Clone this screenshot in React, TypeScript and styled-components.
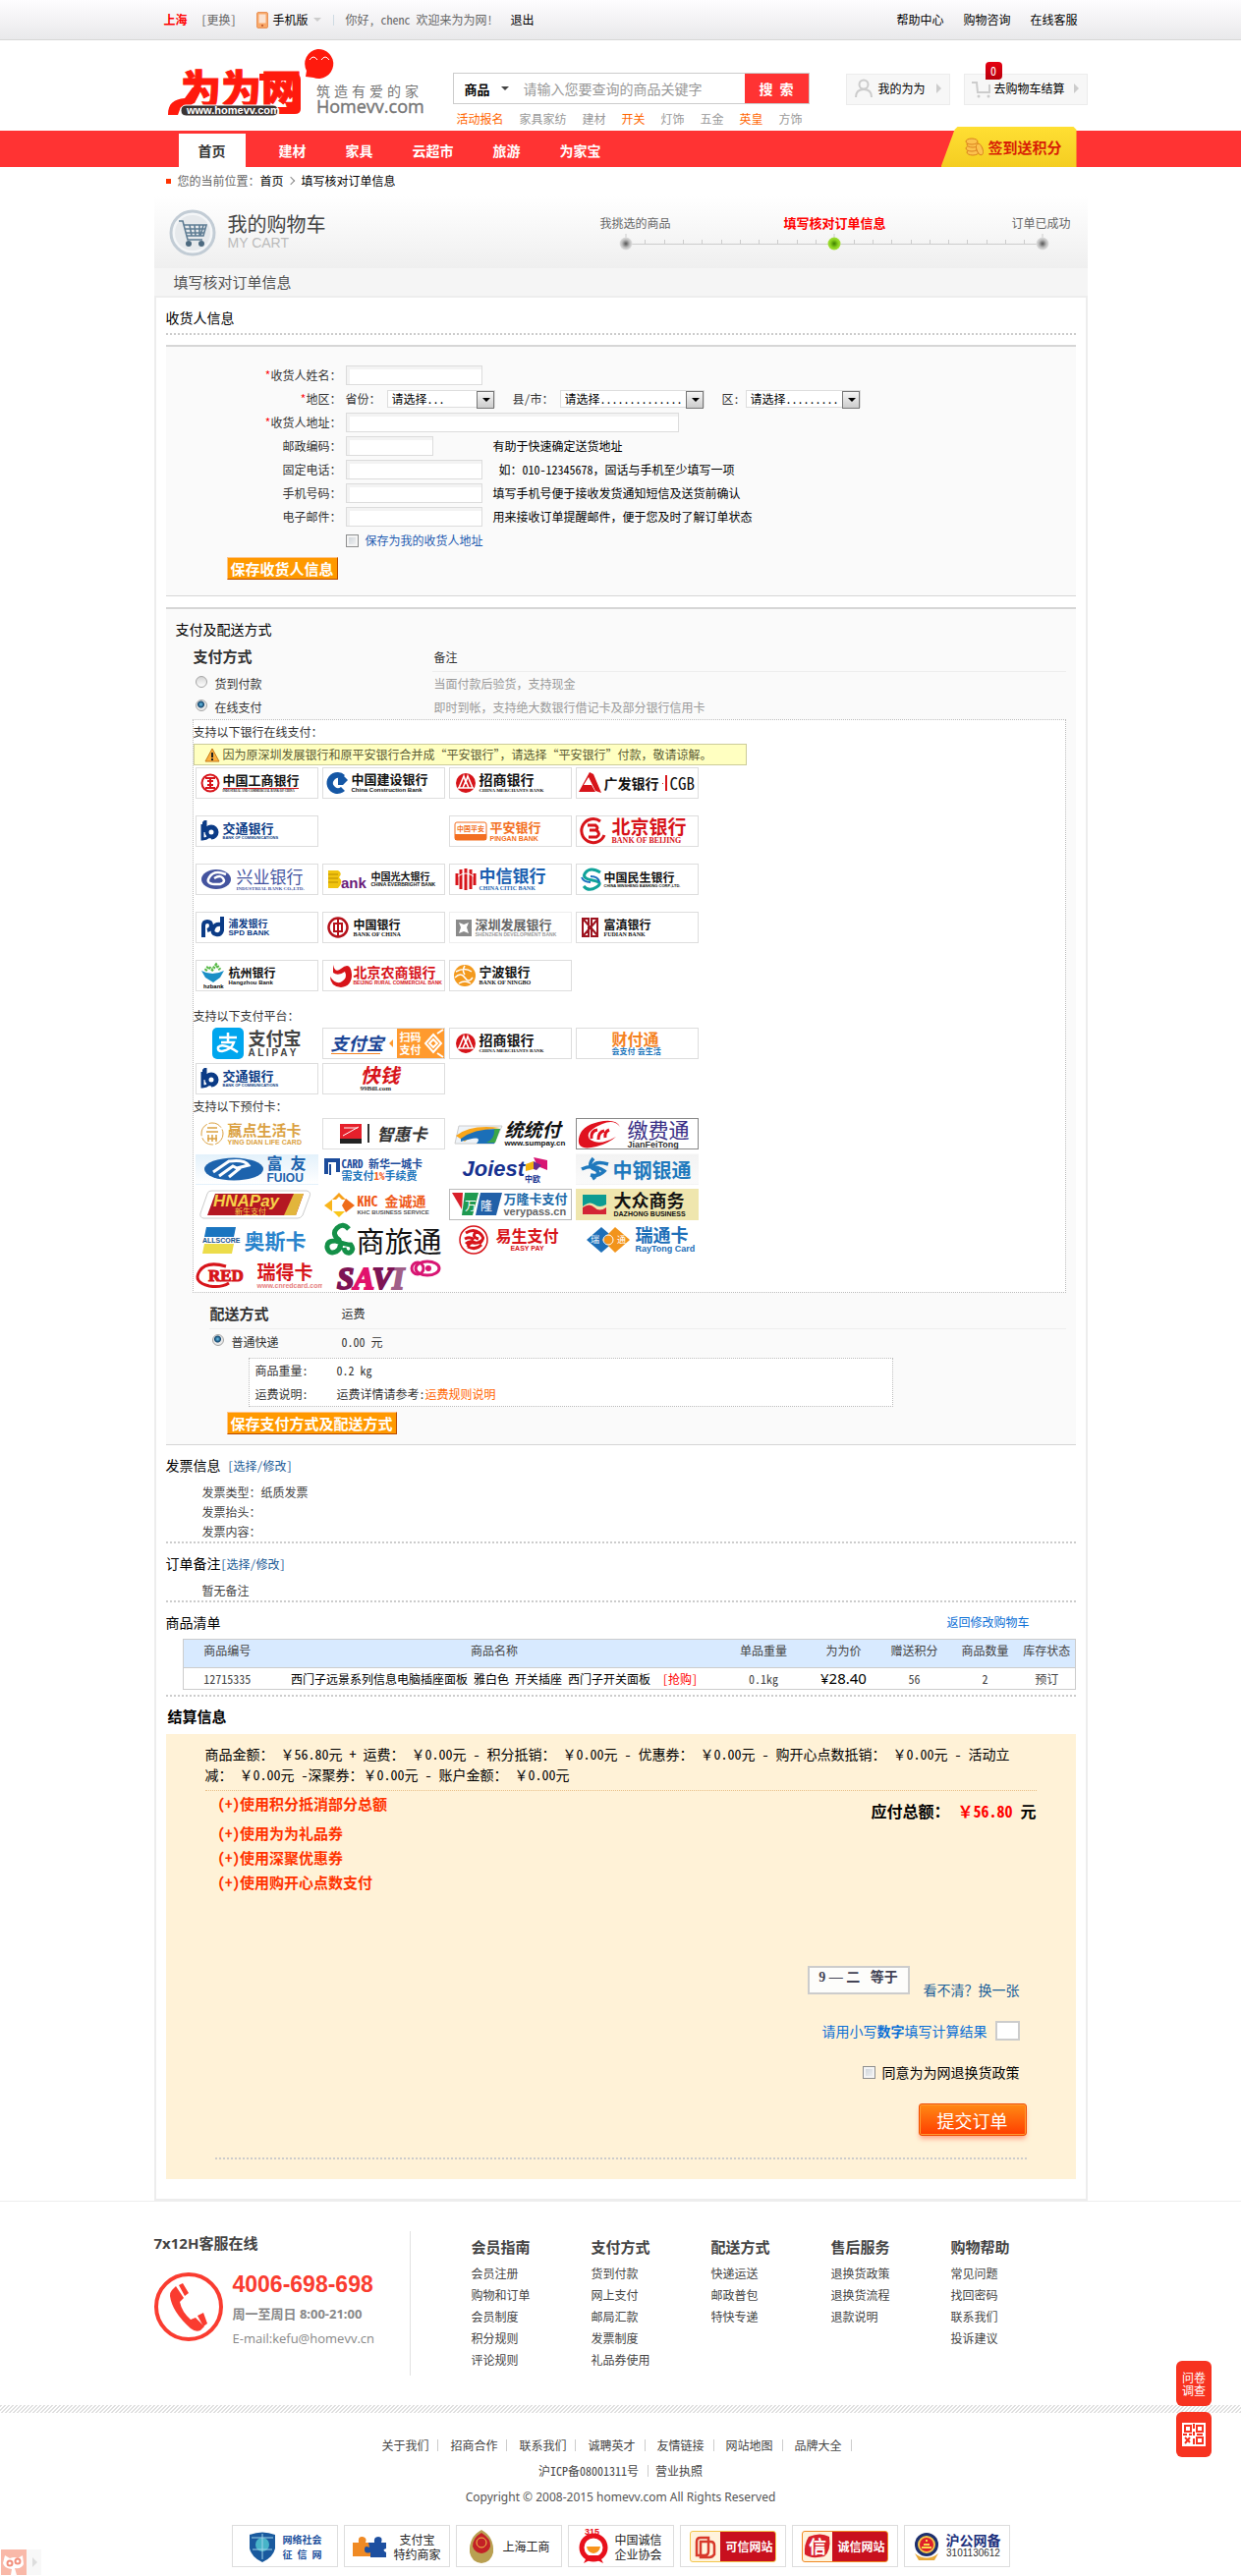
import React, { ReactNode } from 'react';
import styled, { createGlobalStyle, css } from 'styled-components';

const cjk = '"Noto Sans Mono CJK SC", "Noto Sans CJK SC", sans-serif';
const latin = '"Noto Sans", "Noto Sans CJK SC", sans-serif';

const GlobalStyle = createGlobalStyle`
  * { box-sizing: border-box; }
  body { margin: 0; background: #fff; color: #333; font: 12px/24px ${cjk}; }
  ul, ol, dl, dd, h1, h2, h3, p, fieldset { margin: 0; padding: 0; border: 0; list-style: none; font-weight: 400; }
  a { color: inherit; text-decoration: none; }
  input, select, button { font-family: inherit; margin: 0; border-radius: 0; }
  svg { display: block; flex: none; overflow: visible; }
`;

const Wrap = styled.div`
  width: 100%;
  max-width: 950px;
  margin: 0 auto;
`;

/* ---------- top bar ---------- */
const TopBar = styled.div`
  background: linear-gradient(#fefdff, #e9e9eb);
  border-bottom: 1px solid #d6d6d6;
`;
const TopInner = styled(Wrap)`
  display: flex;
  align-items: center;
  padding: 0 10px;
  line-height: 40px;
  color: #666;
  white-space: nowrap;
`;
const City = styled.strong`color: #f00; margin-right: 14px;`;
const Dark = styled.a`color: #000;`;
const Logout = styled(Dark)`margin-left: 18px;`;
const Mobile = styled.a`
  display: flex;
  align-items: center;
  gap: 5px;
  margin: 0 12px 0 20px;
  color: #000;
`;
const Caret = styled.i<{ $color: string }>`
  border: 4px solid transparent;
  border-top-color: ${p => p.$color};
  border-bottom: 0;
`;
const Sep = styled.i`width: 1px; height: 11px; background: #cfdbe3; margin-right: 12px;`;
const TopRight = styled.nav`display: flex; gap: 20px; margin-left: auto;`;

/* ---------- header ---------- */
const Header = styled(Wrap)`
  display: flex;
  align-items: flex-start;
  padding: 8px 0 0 13px;
  height: 92px;
`;
const SearchCol = styled.div`margin: 25px 37px 0 31px; flex: 1;`;
const SearchBox = styled.form`
  display: flex;
  align-items: center;
  height: 32px;
  border: 1px solid #ccc;
`;
const SearchKind = styled.label`
  display: flex;
  align-items: center;
  width: 60px;
  padding-left: 11px;
`;
const KindSelect = styled.select`
  appearance: none;
  border: 0;
  padding: 0;
  width: 37px;
  background: none;
  font-size: 13px;
  font-weight: 700;
  color: #000;
`;
const SearchInput = styled.input`
  flex: 1;
  min-width: 0;
  border: 0;
  padding: 0 11px;
  font-size: 14px;
  outline: 0;
  &::placeholder { color: #999; opacity: 1; }
`;
const SearchButton = styled.button`
  width: 65px;
  height: 30px;
  border: 0;
  background: #ff3333;
  color: #fff;
  font-size: 14px;
  font-weight: 700;
`;
const HotList = styled.div`display: flex; gap: 16px; padding: 3px 4px; white-space: nowrap;`;
const Hot = styled.a<{ $on?: boolean }>`color: ${p => (p.$on ? '#ff6600' : '#999')};`;
const HeadButton = styled.a<{ $w: number }>`
  position: relative;
  display: flex;
  align-items: center;
  width: ${p => p.$w}px;
  height: 32px;
  margin-top: 26px;
  padding: 0 8px 3px 6px;
  border: 1px solid #ececec;
  background: #f7f7f7;
  color: #000;
  white-space: nowrap;
  & + & { margin-left: 14px; }
`;
const Arrow = styled.i`
  margin-left: auto;
  border: 5px solid transparent;
  border-left-color: #ccc;
  border-right: 0;
`;
const Badge = styled.b`
  position: absolute;
  left: 21px;
  top: -13px;
  width: 17px;
  height: 18px;
  border-radius: 4px 4px 4px 0;
  background: linear-gradient(#e60012, #b8000c);
  color: #fff;
  font-weight: 400;
  line-height: 18px;
  text-align: center;
`;

/* ---------- navigation ---------- */
const NavBar = styled.nav`background: #ff3333;`;
const NavInner = styled(Wrap)`display: flex; height: 37px; padding: 3px 11px 0 25px;`;
const NavLink = styled.a<{ $on?: boolean }>`
  padding: 0 20px;
  line-height: 34px;
  font-size: 14px;
  font-weight: 700;
  color: #fff;
  ${p => p.$on && css`background: #fff; color: #333; margin-right: 14px;`}
`;
const Points = styled.a`
  display: flex;
  align-items: center;
  gap: 4px;
  width: 138px;
  height: 41px;
  margin: -7px 0 0 auto;
  padding-left: 24px;
  background: linear-gradient(#ffdf33, #f4cd22);
  clip-path: polygon(17px 0, 135px 0, 100% 3px, 100% 100%, 0 100%, 14px 3px);
  color: #d81e06;
  font-size: 15px;
  font-weight: 700;
`;

const Crumbs = styled(Wrap)`
  display: flex;
  align-items: center;
  padding: 2px 12px 4px;
  color: #666;
  a { color: #000; }
`;
const Bullet = styled.i`width: 5px; height: 5px; background: #ff3300; margin-right: 7px;`;
const Chevron = styled.i`
  width: 6px; height: 6px; margin: 0 8px 0 4px;
  border: solid #888; border-width: 1px 1px 0 0; transform: rotate(45deg);
`;

/* ---------- banner ---------- */
const Banner = styled(Wrap)`
  display: flex;
  align-items: center;
  height: 73px;
  padding: 0 0 0 15px;
  background: linear-gradient(#fff, #efefef);
`;
const BannerTitle = styled.h1`
  margin: 0 auto 0 12px;
  font-size: 20px;
  line-height: 22px;
  color: #444;
  small { display: block; font: 14px/17px "Liberation Sans", sans-serif; color: #bbb; }
`;
const Steps = styled.ol`
  display: grid;
  grid-template-columns: 92px 314px 1fr;
  width: 496px;
  margin-right: 10px;
  color: #666;
  line-height: 20px;
`;
const Step = styled.li<{ $on?: boolean; $last?: boolean }>`
  text-align: center;
  ${p => p.$last && css`text-align: right; padding-right: 7px;`}
  ${p => p.$on && css`color: #f00; font-weight: 700; font-size: 13px;`}
`;
const SubBar = styled(Wrap)`
  padding: 0 20px;
  background: #f5f5f5;
  line-height: 28px;
  font-size: 15px;
  color: #555;
`;

/* ---------- main box ---------- */
const Main = styled.main`
  width: 100%;
  max-width: 950px;
  margin: 0 auto;
  padding: 0 10px 20px;
  border: 2px solid #ededed;
`;
const Block = styled.section`padding-top: 10px; border-bottom: 2px dotted #ccc;`;
const Title = styled.h2<{ $bold?: boolean }>`
  font-size: 14px;
  line-height: 20px;
  color: #000;
  ${p => p.$bold && css`font-weight: 700; font-size: 15px;`}
`;
const TitleRow = styled.div`display: flex; justify-content: space-between; padding-bottom: 6px; line-height: 20px;`;
const GoBack = styled.a`margin-right: 47px; color: #0b6fd6;`;
const Edit = styled.a<{ $gap?: boolean }>`
  margin-left: ${p => (p.$gap ? 7 : 0)}px;
  font-size: 12px;
  color: #1c5c96;
`;
const Lines = styled.div`padding: 7px 0 0 37px; line-height: 20px; color: #444;`;
const Panel = styled.section`
  margin-top: 10px;
  padding: 17px 0 16px;
  border: solid #d6d6d6;
  border-width: 2px 0 1px;
  background: #fafafa;
`;
const PayPanel = styled(Panel)`margin-top: 11px; padding: 10px 10px;`;

const Field = styled.div`display: flex; align-items: center; height: 24px; color: #333; white-space: nowrap;`;
const FieldLabel = styled.label`
  width: 179px;
  margin-right: 4px;
  text-align: right;
  i { color: #f00; font-style: normal; }
`;
const FieldControl = styled.div`width: 150px;`;
const Text = styled.input<{ $w: number }>`
  display: block;
  width: ${p => p.$w}px;
  height: 20px;
  padding: 0 4px;
  border: 1px solid #dcdcdc;
  background: #fff;
  box-shadow: inset 3px 3px 0 #f3f3f3;
`;
const Note = styled.span`color: #000;`;
const SelectBox = styled.span<{ $w: number }>`
  position: relative;
  display: block;
  width: ${p => p.$w}px;
  height: 18px;
  margin: 0 18px 0 6px;
  &::before {
    content: '';
    position: absolute;
    right: 1px; top: 1px; width: 16px; height: 16px;
    border: 1px solid #777;
    background: linear-gradient(#f5f5f5, #ccc);
    pointer-events: none;
  }
  &::after {
    content: '';
    position: absolute;
    right: 5px; top: 8px;
    border: 4px solid transparent;
    border-top-color: #000;
    border-bottom: 0;
    pointer-events: none;
  }
`;
const Select = styled.select`
  display: block;
  appearance: none;
  width: 100%;
  height: 18px;
  padding: 0 0 0 4px;
  border: 1px solid #ddd;
  background: #fff;
  font-size: 12px;
  line-height: 16px;
  color: #000;
`;
const Check = styled.input`
  appearance: none;
  width: 13px;
  height: 13px;
  border: 1px solid #8e8f8f;
  background: linear-gradient(135deg, #c9d0d6, #f6f6f6);
  box-shadow: inset 0 0 0 2px #f4f4f4;
`;
const Radio = styled.input`
  appearance: none;
  flex: none;
  width: 12px;
  height: 12px;
  margin: 0 8px 4px 2px;
  border: 1px solid #a5a5a5;
  border-radius: 50%;
  background: linear-gradient(#d5d5d5, #fff);
  &:checked { background: radial-gradient(circle at 45% 40%, #6cc6ee 0, #12456e 3px, #e8e8e8 4px); }
`;
const SaveButton = styled.button<{ $indent: number }>`
  display: block;
  margin: 5px 0 0 ${p => p.$indent}px;
  height: 23px;
  padding: 0 3px;
  border: 1px solid;
  border-color: #ffc58a #b84a00 #b84a00 #ffc58a;
  background: #ff9900;
  color: #fff;
  font-size: 15px;
  line-height: 20px;
  font-weight: 700;
`;
const SaveLabel = styled.label`color: #1f5bb0; padding-left: 7px;`;

const PayTable = styled.div`padding: 6px 0 0 18px;`;
const PayRow = styled.div`display: flex; color: #333;`;
const PayCell = styled.label`display: flex; align-items: center; width: 243px;`;
const PayHead = styled.div`width: 243px; font-size: 15px; font-weight: 700;`;
const PayHeadNote = styled.div`flex: 1; padding: 1px 0 2px 2px; border-bottom: 1px solid #eee;`;
const PayNote = styled.span`color: #999; padding-left: 2px;`;

const BankBox = styled.div`
  margin: 0 0 0 17px;
  padding-bottom: 1px;
  border: 1px dotted #bbb;
  background: #fff;
`;
const BankTitle = styled.h3`font-size: 12px; line-height: 24px;`;
const Warning = styled.p`
  display: flex;
  align-items: center;
  gap: 3px;
  width: 563px;
  padding-left: 10px;
  border: 1px solid #cccc99;
  background: #ffffc1;
  line-height: 20px;
  color: #5c5c33;
  white-space: nowrap;
`;
const Tiles = styled.ul<{ $gap: number; $after?: number }>`
  display: grid;
  grid-template-columns: repeat(4, 125px);
  gap: ${p => p.$gap}px 4px;
  padding: ${p => (p.$gap > 10 ? 2 : 0)}px 0 ${p => p.$after || 0}px 2px;
`;
const Tile = styled.li<{ $pad: number; $gap?: number; $border?: string; $bg?: string }>`
  display: flex;
  align-items: center;
  gap: ${p => p.$gap ?? 3}px;
  height: 32px;
  padding-left: ${p => p.$pad}px;
  border: 1px solid ${p => p.$border || '#ddd'};
  background: ${p => p.$bg || '#fff'};
  white-space: nowrap;
`;
const Words = styled.div`display: flex; flex-direction: column; align-items: flex-start;`;
const Name = styled.span<{ $size: number; $color: string; $light?: boolean; $slant?: boolean }>`
  font-size: ${p => p.$size}px;
  line-height: ${p => p.$size + 1}px;
  font-weight: ${p => (p.$light ? 400 : 700)};
  font-style: ${p => (p.$slant ? 'italic' : 'normal')};
  color: ${p => p.$color};
`;
const Sub = styled.span<{ $size: number; $color: string; $serif?: boolean }>`
  font: 700 ${p => p.$size}px/${p => p.$size + 2}px ${p => (p.$serif ? '"Liberation Serif", serif' : '"Liberation Sans", "Noto Sans CJK SC", sans-serif')};
  color: ${p => p.$color};
`;
const Rule = styled.i<{ $w: number; $color: string }>`width: ${p => p.$w}px; height: 1px; margin-top: 1px; background: ${p => p.$color};`;
const Orange = styled.div`
  display: flex;
  align-items: center;
  gap: 2px;
  flex: none;
  height: 30px;
  width: 48px;
  padding-left: 3px;
  background: #ff9a2e;
  color: #fff;
  font-size: 11px;
  line-height: 13px;
  font-weight: 700;
  span { flex: none; }
`;

const ShipTable = styled.div`margin: 9px 0 0 34px;`;
const ShipHead = styled.div`display: flex; height: 28px; border-bottom: 1px solid #eee; margin-bottom: 1px; padding-left: 1px;`;
const ShipRow = styled.div`display: flex; color: #333; padding-left: 1px;`;
const ShipCell = styled.label<{ $bold?: boolean }>`
  display: flex; align-items: center; width: 134px;
  ${p => p.$bold && css`font-size: 15px; font-weight: 700; line-height: 24px; display: block;`}
`;
const ShipBox = styled.dl`
  display: grid;
  grid-template-columns: 83px 1fr;
  width: 656px;
  max-width: 100%;
  margin: 4px 0 0 40px;
  padding-left: 6px;
  border: 1px dotted #bbb;
  background: #fff;
  dt { margin: 0; }
  a { color: #ff6600; }
`;

const Goods = styled.table`
  width: calc(100% - 17px);
  margin: 1px 0 5px 17px;
  border-collapse: collapse;
  table-layout: fixed;
  border: 1px solid #ccc;
  text-align: center;
  color: #444;
  th { height: 29px; padding: 0 0 7px; background: #d8eaff; font-weight: 400; line-height: 20px; }
  td { height: 22px; padding: 0; border-top: 1px solid #ccc; line-height: 20px; }
  a { color: #000; }
  em { color: #f00; font-style: normal; margin-left: 12px; }
`;
const Price = styled.span`font: 15px/20px ${latin}; color: #000;`;

/* ---------- settlement ---------- */
const SettleTitle = styled.div`padding: 10px 2px 8px;`;
const Settle = styled.section`padding: 10px 40px 20px; background: #fff2d7;`;
const Sum = styled.p`
  padding-bottom: 5px;
  border-bottom: 1px dotted #e8c088;
  font-size: 14px;
  line-height: 21px;
  color: #000;
  white-space: nowrap;
`;
const SettleRow = styled.div`display: flex; justify-content: space-between;`;
const Options = styled.ul`
  padding-left: 13px;
  font-size: 15px;
  line-height: 25px;
  font-weight: 700;
  color: #ff3300;
  li:first-child { margin-bottom: 5px; }
`;
const Total = styled.p`
  padding-top: 8px;
  font-size: 16px;
  line-height: 24px;
  font-weight: 700;
  color: #000;
  b { color: #f00; }
`;
const Confirm = styled.div`
  display: flex;
  flex-direction: column;
  align-items: flex-end;
  margin: 73px 10px 0;
  padding-bottom: 14px;
  border-bottom: 2px dotted #ccc;
  font-size: 14px;
  line-height: 20px;
`;
const ConfirmRow = styled.div<{ $h: number }>`
  display: flex;
  align-items: center;
  height: ${p => p.$h}px;
  margin: 0 7px 22px 0;
`;
const Captcha = styled.span`
  width: 104px;
  height: 29px;
  margin: 0 14px 5px 0;
  border: 2px solid #ccc;
  background: #fdfdfb;
  font: 700 14px/20px "Liberation Serif", "Noto Sans CJK SC", serif;
  color: #445;
  text-align: center;
  white-space: pre;
`;
const Change = styled.a`color: #1a5f99; margin-top: 14px;`;
const Ask = styled.label`color: #0b6fd6; margin-right: 8px;`;
const Answer = styled.input`width: 25px; height: 20px; border: 2px solid #ccc; background: #fff;`;
const Agree = styled.label`display: flex; align-items: center; gap: 7px; color: #000;`;
const Submit = styled.button`
  width: 110px;
  height: 33px;
  margin-bottom: 8px;
  border: 1px solid #f04a00;
  border-radius: 3px;
  background: linear-gradient(#ff8a14, #ff3d00);
  box-shadow: inset 0 0 0 1px #ff9c33, 0 4px 5px -1px #ffa58a;
  color: #fff;
  font-size: 18px;
  line-height: 28px;
`;

/* ---------- footer ---------- */
const Footer = styled.footer`border-top: 1px solid #eee; color: #444;`;
const FootTop = styled(Wrap)`display: flex; padding: 30px 0;`;
const Service = styled.div`width: 261px; height: 147px; border-right: 1px solid #e2e2e2;`;
const ServiceTitle = styled.h3`font: 700 15px/24px ${latin};`;
const Contact = styled.div`display: flex; gap: 10px; padding-top: 18px;`;
const Phone = styled.p`font: 700 23px/24px "Liberation Sans", sans-serif; color: #fa3c30;`;
const Hours = styled.p`padding-top: 4px; font: 700 13px/28px ${latin}; color: #888; white-space: nowrap;`;
const Mail = styled.p`font: 13px/22px "Open Sans", sans-serif; color: #888;`;
const Help = styled.div`display: flex; padding: 4px 0 0 62px;`;
const HelpCol = styled.div`
  width: 122px;
  h3 { font-size: 15px; line-height: 24px; font-weight: 700; padding-bottom: 4px; }
  li { line-height: 22px; }
`;
const Hatch = styled.div`
  height: 8px;
  background: linear-gradient(135deg, #e0e0e0 25%, #fff 25% 50%, #e0e0e0 50% 75%, #fff 75%) 0 0 / 4px 4px;
`;
const Legal = styled.div`display: flex; flex-direction: column; align-items: center; padding: 20px 0 4px; line-height: 26px;`;
const Bar = styled.i`width: 1px; height: 12px; margin-left: 9px; margin-right: 7px; background: #ccc;`;
const LinkRow = styled.div`
  display: flex;
  align-items: center;
  ${Bar} { margin-right: 12px; }
  ${Bar}:last-child { margin-right: 8px; }
`;
const LinkPair = styled.div`display: flex; align-items: center;`;
const Copy = styled.p`font: 12px/28px "Noto Sans", sans-serif; color: #555;`;
const Certs = styled.ul`display: flex; justify-content: center; gap: 6px; padding: 14px 0 5px;`;
const Cert = styled.li<{ $ink?: string; $size?: number }>`
  display: flex;
  align-items: center;
  justify-content: center;
  gap: 6px;
  width: 108px;
  height: 43px;
  border: 1px solid #ddd;
  background: #fff;
  font-size: ${p => p.$size || 12}px;
  line-height: 15px;
  color: ${p => p.$ink || '#222'};
  white-space: pre-line;
  text-align: center;
  small { display: block; font: 10px/12px "Liberation Sans", sans-serif; color: #333; }
`;
const RedSign = styled.span<{ $edge: string }>`
  display: flex;
  align-items: center;
  gap: 6px;
  width: 88px;
  height: 32px;
  border: 1px solid ${p => p.$edge};
  border-radius: 3px;
  background: linear-gradient(90deg, #fff3dc 30px, #c8101e 30px);
  color: #fff;
  font-size: 12px;
  font-weight: 700;
`;

const Side = styled.div`
  position: fixed;
  right: 30px;
  bottom: 121px;
  display: flex;
  flex-direction: column;
  gap: 6px;
`;
const SideButton = styled.a`
  display: flex;
  align-items: center;
  justify-content: center;
  width: 36px;
  height: 46px;
  border-radius: 6px;
  background: #f73320;
  color: #fff;
  font-size: 12px;
  line-height: 13px;
  text-align: center;
`;
const Share = styled.a`
  position: fixed;
  left: 1px;
  bottom: 1px;
  display: flex;
  align-items: center;
  gap: 6px;
  width: 41px;
  background: #f8f8f8;
`;

/* ---------- drawings ---------- */
const Logo = () => (
  <svg width="260" height="72" viewBox="0 0 260 72" aria-label="为为网 筑造有爱的家 Homevv.com">
    <path d="M1 68C1 56 7 52 18 51L26 40H36L28 56 14 60 11 68Z" fill="#ff1a0d" />
    <text x="14" y="57" fontFamily="Noto Sans CJK SC" fontSize="41" fontWeight="900" fill="#ff1a0d" stroke="#ff1a0d">为为网</text>
    <path d="M94 26H130Q136 26 136 32V62Q136 67 130 67H112V60H128V33H94Z" fill="#ff1a0d" />
    <rect x="14" y="58" width="99" height="11" rx="5" fill="#3a3332" stroke="#fff" />
    <text x="20" y="67" fontFamily="Liberation Sans" fontSize="11" fontWeight="700" fill="#fff">www.homevv.com</text>
    <path d="M153 1a15 15 0 1 1-4 29l-8-1 1-6A15 15 0 0 1 153 1Z" fill="#ff1a0d" />
    <path d="M145 12q4-6 8 0M157 12q4-6 8 0" stroke="#fff" fill="none" />
    <text x="152" y="49" fontFamily="Noto Sans CJK SC" fontSize="14" letterSpacing="4" fill="#777">筑造有爱的家</text>
    <text x="152" y="66" fontFamily="Open Sans" fontSize="18" fill="#777" stroke="#777" strokeWidth=".4">Homevv.com</text>
  </svg>
);
const CartIcon = () => (
  <svg width="48" height="48" viewBox="0 0 48 48">
    <circle cx="24" cy="24" r="22" fill="#f4f6f8" stroke="#c2ccd5" strokeWidth="3" />
    <circle cx="24" cy="24" r="18" fill="#e6e9ec" />
    <path d="M10 12h4l5 19h15M15 16h23l-3 11H18M21 16l2 11M26 16l1 11M31 16v11M35 16l-3 11M16 20h21M17 24h19" fill="none" stroke="#5f7d94" strokeWidth="1.6" />
    <circle cx="20" cy="35" r="3" fill="#4d6a80" /><circle cx="33" cy="35" r="3" fill="#4d6a80" />
  </svg>
);
const ticks = Array.from({ length: 21 }, (_, i) => i + 1);
const Track = () => (
  <svg width="496" height="20" viewBox="0 0 496 20">
    <defs>
      <radialGradient id="gd"><stop offset="0" stopColor="#555" /><stop offset=".6" stopColor="#bbb" /><stop offset="1" stopColor="#e2e2e2" /></radialGradient>
      <radialGradient id="gg"><stop offset="0" stopColor="#3d7d00" /><stop offset=".6" stopColor="#86cf1c" /><stop offset="1" stopColor="#a6e03c" /></radialGradient>
    </defs>
    <path d={'M36 11.5H460' + ticks.map(i => `M${Math.round(36 + i * 19.3) + 0.5} 7v4`).join('')} stroke="#ccc" />
    {[36, 248, 460].map((x, i) => (
      <g key={x}><path d={`M${x} 1v6`} stroke="#ccc" /><circle cx={x} cy="11" r="6.5" fill={i === 1 ? 'url(#gg)' : 'url(#gd)'} /></g>
    ))}
  </svg>
);
const Svg = ({ w, h = 24, children }: { w: number; h?: number; children: ReactNode }) => (
  <svg width={w} height={h} viewBox={`0 0 ${w} ${h}`}>{children}</svg>
);
const R = '#d7141a', N = '#0b3b86';
const marks: Record<string, ReactNode> = {
  icbc: <Svg w={20}><circle cx="10" cy="12" r="8.5" fill="none" stroke={R} strokeWidth="2" /><path d="M5 7h10M5 17h10M7 10h6M7 14h6M10 7v10" stroke={R} strokeWidth="2" /></Svg>,
  ccb: <Svg w={22}><path d="M11 1a11 11 0 0 1 7 3l-4 4a5 5 0 1 0 0 8l4 4A11 11 0 1 1 11 1Z" fill="#1557a5" /><path d="M11 7l4-4 6 6-5 5h-5Z" fill="#1557a5" /></Svg>,
  cmb: <Svg w={20}><circle cx="10" cy="12" r="10" fill={R} /><path d="M3 17 8 5l2 6 2-6 5 12M7 17l3-7 3 7M2 17h16" fill="none" stroke="#fff" strokeWidth="1.6" /></Svg>,
  cgb: <Svg w={24}><path d="M12 1 16 3 24 22 18 20 11 6 6 14H14L18 21H1Z" fill={R} /></Svg>,
  bocom: <Svg w={19}><path d="M2 4q3 0 3-3v12a6 6 0 1 1 6 6M2 5v15q4 0 6-2" fill="none" stroke={N} strokeWidth="3" /><circle cx="11" cy="13" r="4.5" fill="none" stroke={N} strokeWidth="4" /></Svg>,
  pingan: <Svg w={34} h={20}><rect x="1" y="1" width="32" height="18" rx="2" fill="#fff" stroke="#f36f21" /><rect x="1" y="13" width="32" height="6" fill="#f36f21" /><text x="3" y="10" fontSize="7" fontWeight="700" fill="#f36f21" fontFamily="Noto Sans CJK SC">中国平安</text></Svg>,
  bob: <Svg w={26} h={28}><path d="M20 4A12 12 0 1 0 24 18" fill="none" stroke={R} strokeWidth="3" /><path d="M7 8h8q4 3 0 5H9h7q5 4 0 7H8" fill="none" stroke={R} strokeWidth="3" /></Svg>,
  cib: <Svg w={32}><ellipse cx="16" cy="12" rx="15" ry="10" fill="#44549f" /><path d="M26 7Q14 2 9 10t11 7q6-2 3-6t-9 0" fill="none" stroke="#fff" strokeWidth="2.5" /></Svg>,
  ceb: <Svg w={42}><path d="M1 3h10q5 3 1 7 5 5-1 11H1Z" fill="#f1c40f" /><path d="M1 7h10M1 11h10M1 15h10" stroke="#b98b00" /><text x="14" y="21" fontFamily="Liberation Sans" fontSize="15" fontWeight="700" fill="#6a1b7a">ank</text></Svg>,
  citic: <Svg w={22}><path d="M6 2v20M11 1v22M16 2v20M2 6v12M20 6v12" stroke={R} strokeWidth="3" /><path d="M3 9q8-6 16 0" stroke="#fff" fill="none" /></Svg>,
  cmbc: <Svg w={21}><path d="M20 5Q10-1 5 5t7 8 4 7-13-1" fill="none" stroke="#10a39a" strokeWidth="3" /><path d="M1 10q2 5 9 5M19 15q-1-6-9-6" fill="none" stroke="#1a6fc0" strokeWidth="2" /></Svg>,
  spd: <Svg w={24}><path d="M3 22V10q0-4 4-4t4 4-4 5M22 1v14q-1 5-6 4t-3-6 8-4" fill="none" stroke={N} strokeWidth="4" /></Svg>,
  boc: <Svg w={22}><circle cx="11" cy="12" r="9.5" fill="none" stroke="#b5121b" strokeWidth="2.5" /><path d="M11 2v20M7 8h8v8H7Z" stroke="#b5121b" strokeWidth="2" fill="none" /></Svg>,
  sdb: <Svg w={18}><path d="M1 4h16v17H1Z" fill="#8a8a8a" /><path d="M4 7l5 2 5-2-2 5 2 6-5-2-5 2 2-6Z" fill="#fff" /></Svg>,
  fudian: <Svg w={19}><path d="M2 3h6v18H2ZM11 3h6v18h-6ZM3 4l14 16M17 4 3 20" fill="none" stroke="#9d1420" strokeWidth="2" /></Svg>,
  hz: <Svg w={25} h={26}><path d="M1 8q11 6 23 0l-4 7-7 5-8-5Z" fill="#1b8fc6" /><path d="M5 8l3-4 4 3 4-5 4 5" stroke="#57b947" strokeWidth="3" strokeDasharray="2 1" fill="none" /><text x="3" y="26" fontSize="6" fontWeight="700" fontFamily="Liberation Sans">hzbank</text></Svg>,
  brcb: <Svg w={24} h={28}><path d="M4 3q2 9 8 4 10-8 11 6 0 12-11 13Q1 25 1 15q6 9 12 5t3-10q-7 5-12 1Z" fill={R} /></Svg>,
  ningbo: <Svg w={23}><circle cx="11" cy="12" r="11" fill="#f39a1e" /><path d="M2 8q9-5 16 0M1 14q6-6 10 0t8 0M5 20q6-4 12 0M11 2q-3 5 0 9" stroke="#fff" fill="none" strokeWidth="1.5" /></Svg>,
  alipay: <Svg w={32} h={32}><rect width="32" height="32" rx="5" fill="#00a6ee" /><path d="M7 10h18M16 5v9M9 15h13q-2 7-12 9-5 0-4-4 5-5 20 5" fill="none" stroke="#fff" strokeWidth="2.5" /></Svg>,
  ying: <Svg w={24}><circle cx="12" cy="12" r="11" fill="none" stroke="#dba243" strokeDasharray="14 2" /><path d="M7 6h10M6 10h12M8 13v7M12 13v7M16 13v7M7 17h10" stroke="#dba243" strokeWidth="1.5" /></Svg>,
  zhi: <Svg w={34}><rect x="1" y="2" width="22" height="15" fill="#e6202b" /><path d="M4 14 20 5M5 6h14" stroke="#fff" /><rect x="1" y="17" width="22" height="5" fill="#222" /><path d="M30 2v19" stroke="#333" strokeWidth="2" /></Svg>,
  sum: <Svg w={54}><path d="M4 22 8 4H52L44 22Z" fill="#eef3f8" stroke="#ccc" /><path d="M5 14Q20 2 50 6 26 8 14 20Z" fill="#f9a61a" /><path d="M10 17Q24 6 50 7L44 22H26Q34 12 10 20Z" fill="#1b6fb8" /><path d="M44 7h6l-5 14h-9q9-4 8-14Z" fill="#3aa648" /></Svg>,
  jiao: <Svg w={46} h={30}><path d="M44 8Q40-1 22 3T2 20t18 8q12-3 20-10-14 8-22 5t-6-8 14-10 18 3Z" fill="#e0121f" /><path d="M15 20q-1-8 6-9M22 21q0-8 6-9M29 19q-1-6 4-8" stroke="#e0121f" strokeWidth="3" fill="none" /></Svg>,
  fuiou: <Svg w={62} h={26}><ellipse cx="31" cy="13" rx="30" ry="11.5" fill="#1d63ad" /><path d="M10 16 26 5q16-2 20 4l-12 3M16 20 30 10l6 3-10 8" stroke="#fff" strokeWidth="3" fill="none" /></Svg>,
  ncard: <Svg w={16}><path d="M2 17V3h12v12" fill="none" stroke="#1b4b9b" strokeWidth="4" /><path d="M6 18V7" stroke="#1b4b9b" strokeWidth="2" /></Svg>,
  joiest: <Svg w={24} h={18}><path d="M1 8 9 5v8l-8 2Z" fill="#f2b20f" /><path d="M9 1l14 3v10L13 10Z" fill="#d81673" /><path d="M9 5l8 4-5 5-3-1Z" fill="#6b2a8c" /></Svg>,
  sinosteel: <Svg w={30}><path d="M14 1q-7 8 1 11t-2 10M29 7q-14-4-16 3M2 12q12-6 23 2-6 6-14 4" fill="none" stroke="#2079bd" strokeWidth="3.5" /></Svg>,
  khc: <Svg w={33} h={26}><path d="M16 1l7 7h-4l-3-3-3 3H9Z" fill="#f7a11b" /><path d="M9 8 1 14l8 6Z" fill="#f9b51c" /><path d="M23 7l9 7-9 7-4-7Z" fill="#ef6c1a" /><path d="M10 20h12l-6 6Z" fill="#f9c81c" /></Svg>,
  wan: <Svg w={54} h={26}><path d="M1 1h11l-1 17Z" fill="#d8202a" /><path d="M14 1h14l-6 23H11Z" fill="#1f9a51" /><path d="M30 1h22l-6 23H25Z" fill="#2160a8" /><text x="14" y="19" fontSize="12" fill="#fff" fontFamily="Noto Sans CJK SC">万</text><text x="30" y="19" fontSize="12" fill="#fff" fontFamily="Noto Sans CJK SC">隆</text></Svg>,
  dazhong: <Svg w={26} h={22}><path d="M1 1h24v10q-7 4-12 0T1 13Z" fill="#0c9c92" /><path d="M1 14q7-5 12 0t12 0v7H1Z" fill="#d32535" /></Svg>,
  allscore: <Svg w={36} h={28}><path d="M5 1h30l-2 10H3Z" fill="#1a75c0" /><path d="M3 18h30l-2 10H1Z" fill="#ecdc4a" /><text x="1" y="17" fontSize="7" fontWeight="700" fill="#17528e" fontFamily="Liberation Sans">ALLSCORE</text></Svg>,
  shang: <Svg w={31} h={32}><path d="M26 5Q20-2 14 4t2 12q4 8-3 12-7 3-9-4-1-7 8-7 12 4 16 4 4 5-1 8-5 1-6-5" fill="none" stroke="#149048" strokeWidth="5" /></Svg>,
  easy: <Svg w={32} h={30}><circle cx="16" cy="15" r="14" fill="#fff" stroke={R} strokeWidth="1.5" /><path d="M8 8q8-5 14 0t2 8-8 2-6 4M7 14q6-3 9 1M19 6q-6 6 2 8M10 22q8 4 14-2M8 19q4-4 10-1M22 19l3-4" fill="none" stroke={R} strokeWidth="3" /></Svg>,
  ray: <Svg w={46} h={28}><path d="M16 1 31 14 16 27 1 14Z" fill="#1d6fb8" /><path d="M30 1 45 14 30 27 17 14Z" fill="#f2941b" /><text x="5" y="17" fontSize="9" fill="#fff" fontFamily="Noto Sans CJK SC">瑞</text><text x="32" y="17" fontSize="9" fill="#fff" fontFamily="Noto Sans CJK SC">通</text><circle cx="23" cy="14" r="5" fill="none" stroke="#fff" /></Svg>,
  red: <Svg w={58} h={26}><path d="M30 4Q10-2 3 9t10 15q12 2 20-3" fill="none" stroke={R} strokeWidth="3" /><text x="12" y="19" fontSize="17" fontWeight="700" fill={R} fontFamily="Liberation Serif" stroke={R}>RED</text></Svg>,
  savi: <Svg w={108} h={30}><text x="2" y="29" fontSize="31" fontWeight="700" fontStyle="italic" fontFamily="Liberation Serif" strokeWidth="2"><tspan fill="#7d1455" stroke="#7d1455">S</tspan><tspan fill="#e2126c" stroke="#e2126c">A</tspan><tspan fill="#7d1455" stroke="#7d1455">V</tspan><tspan fill="#a05f88" stroke="#a05f88">I</tspan></text><circle cx="84" cy="8" r="6" fill="#fff" stroke="#d81673" strokeWidth="3" /><ellipse cx="94" cy="8" rx="12" ry="7" fill="none" stroke="#d81673" strokeWidth="3" /><circle cx="95" cy="8" r="3" fill="#d81673" /></Svg>,
};

type Brand = {
  mark?: string; pad: number; gap?: number; name?: string; size?: number; color?: string; sub?: string; subSize?: number;
  subColor?: string; serif?: boolean; border?: string; bg?: string; light?: boolean; slant?: boolean; body?: ReactNode; empty?: boolean; rule?: string;
};
const K = '#111', none = 'transparent';
const cmb: Brand = { mark: 'cmb', pad: 6, gap: 4, name: '招商银行', size: 14, sub: 'CHINA MERCHANTS BANK', subSize: 5, serif: true };
const bocom: Brand = { mark: 'bocom', pad: 4, gap: 4, name: '交通银行', size: 13, color: N, sub: 'BANK OF COMMUNICATIONS', subSize: 4 };
const banks: Brand[] = [
  { mark: 'icbc', pad: 4, name: '中国工商银行', size: 13, rule: R, sub: 'INDUSTRIAL AND COMMERCIAL BANK OF CHINA', subSize: 3, serif: true },
  { mark: 'ccb', pad: 4, name: '中国建设银行', size: 13, sub: 'China Construction Bank', subSize: 6 },
  cmb,
  { mark: 'cgb', pad: 1, gap: 3, body: <><Name $size={14} $color={K}>广发银行</Name><Rule as="i" $w={1} $color={R} /><Svg w={1} h={16}><path d="M0 0v16" stroke={R} strokeWidth="2" /></Svg><Name $size={17} $color={K} $light>CGB</Name></> },
  bocom,
  { pad: 0, empty: true },
  { mark: 'pingan', pad: 4, name: '平安银行', size: 13, color: '#f36f21', sub: 'PINGAN BANK', subSize: 7 },
  { mark: 'bob', pad: 4, gap: 6, name: '北京银行', size: 19, color: R, sub: 'BANK OF BEIJING', subSize: 8, serif: true },
  { mark: 'cib', pad: 4, gap: 5, name: '兴业银行', size: 17, color: '#44549f', light: true, sub: 'INDUSTRIAL BANK CO.,LTD.', subSize: 5, serif: true },
  { mark: 'ceb', pad: 4, name: '中国光大银行', size: 10, sub: 'CHINA EVERBRIGHT BANK', subSize: 5 },
  { mark: 'citic', pad: 5, name: '中信银行', size: 17, color: '#1a5fb0', sub: 'CHINA CITIC BANK', subSize: 6, serif: true },
  { mark: 'cmbc', pad: 4, name: '中国民生银行', size: 12, sub: 'CHINA MINSHENG BANKING CORP.,LTD.', subSize: 4 },
  { mark: 'spd', pad: 4, gap: 5, name: '浦发银行', size: 10, color: N, sub: 'SPD BANK', subSize: 8 },
  { mark: 'boc', pad: 4, gap: 5, name: '中国银行', size: 12, sub: 'BANK OF CHINA', subSize: 6, serif: true },
  { mark: 'sdb', pad: 5, name: '深圳发展银行', size: 13, color: '#666', sub: 'SHENZHEN DEVELOPMENT BANK', subSize: 5, subColor: '#999', border: '#eee' },
  { mark: 'fudian', pad: 4, gap: 5, name: '富滇银行', size: 12, sub: 'FUDIAN BANK', subSize: 6, serif: true },
  { mark: 'hz', pad: 4, gap: 4, name: '杭州银行', size: 12, sub: 'Hangzhou Bank', subSize: 6 },
  { mark: 'brcb', pad: 6, gap: 1, name: '北京农商银行', size: 14, color: R, sub: 'BEIJING RURAL COMMERCIAL BANK', subSize: 5 },
  { mark: 'ningbo', pad: 4, name: '宁波银行', size: 13, sub: 'BANK OF NINGBO', subSize: 6, serif: true },
];
const platforms: Brand[] = [
  { mark: 'alipay', pad: 16, gap: 5, name: '支付宝', size: 18, color: '#444', sub: 'A L I P A Y', subSize: 10, border: none },
  { pad: 8, gap: 4, body: <><Words><Name $size={18} $color="#1b4596" $slant>支付宝</Name><Rule $w={50} $color="#f5821f" /></Words><Svg w={5}><path d="M5 8 1 12l4 4Z" fill="#ff9a2e" /></Svg><Orange><span>扫码<br />支付</span><Svg w={20} h={30}><path d="M10 6l8 9-8 9-8-9ZM10 11l4 4-4 4-4-4ZM20 1l-6 4M20 29l-6-4" fill="none" stroke="#fff" strokeWidth="2" /></Svg></Orange></> },
  cmb,
  { pad: 36, body: <Words><Name $size={16} $color="#f5821f">财付通</Name><Sub $size={8} $color="#1b75bb">会支付 会生活</Sub></Words> },
  bocom,
  { pad: 38, body: <Words><Name $size={20} $color={R} $slant>快钱</Name><Sub $size={7} $color="#333" $serif>99Bill.com</Sub></Words> },
];
const cards: Brand[] = [
  { mark: 'ying', pad: 4, gap: 4, name: '赢点生活卡', size: 15, color: '#dba243', sub: 'YING DIAN LIFE CARD', subSize: 7, border: none },
  { mark: 'zhi', pad: 16, gap: 5, name: '智惠卡', size: 17, color: '#333', slant: true },
  { mark: 'sum', pad: 1, gap: 1, name: '统统付', size: 19, slant: true, sub: 'www.sumpay.cn', subSize: 8, border: none },
  { mark: 'jiao', pad: 0, gap: 6, name: '缴费通', size: 21, light: true, color: '#3a2f86', sub: 'JianFeiTong', subSize: 9, subColor: '#333', border: '#888' },
  { mark: 'fuiou', pad: 7, gap: 3, name: '富 友', size: 16, color: '#1d63ad', sub: 'FUIOU', subSize: 12, border: none, bg: 'linear-gradient(#e3f1fb, #fff)' },
  { mark: 'ncard', pad: 1, gap: 2, border: none, body: <Words><Name $size={11} $color="#1b4b9b">CARD 新华一城卡</Name><Name $size={11} $color="#1b75bb">需支付<Name as="b" $size={11} $color="#f5601f">1%</Name>手续费</Name></Words> },
  { pad: 13, gap: 0, border: none, body: <><Sub $size={22} $color="#16318f"><i>Joiest</i></Sub><Words>{marks.joiest}<Name $size={8} $color="#16318f">中欧</Name></Words></> },
  { mark: 'sinosteel', pad: 3, gap: 4, name: '中钢银通', size: 20, color: '#2079bd', border: none, bg: 'linear-gradient(#f3f3f3, #fafafa)' },
  { pad: 3, border: none, body: <Svg w={113} h={30}><path d="M12 1H109Q114 2 112 7L105 26Q103 29 100 29H4Q0 28 1 24L8 4Q9 1 12 1Z" fill="#fff" stroke="#ccc" /><path d="M16 4h90L98 26H8Z" fill="#b41722" /><path d="M96 4h10L98 26H86Z" fill="#e2b53c" /><text x="14" y="17" fontSize="17" fontWeight="700" fontStyle="italic" fill="#f6d24a" fontFamily="Liberation Sans">HNAPay</text><text x="36" y="25" fontSize="8" fill="#f6d24a" fontFamily="Noto Sans CJK SC">新生支付</text></Svg> },
  { mark: 'khc', pad: 0, gap: 2, border: none, name: 'KHC 金诚通', size: 14, color: '#ef5a1a', sub: 'KHC BUSINESS SERVICE', subSize: 6, subColor: '#555' },
  { mark: 'wan', pad: 1, gap: 0, border: '#bbb', name: '万隆卡支付', size: 13, color: '#1d6aa8', sub: 'verypass.cn', subSize: 11, subColor: '#666' },
  { mark: 'dazhong', pad: 5, gap: 7, border: none, bg: '#efe6ae', name: '大众商务', size: 18, sub: 'DAZHONG BUSINESS', subSize: 7 },
  { mark: 'allscore', pad: 5, gap: 8, border: none, name: '奥斯卡', size: 21, color: '#2a84cc' },
  { mark: 'shang', pad: 0, gap: 3, border: none, name: '商旅通', size: 29, light: true },
  { mark: 'easy', pad: 8, gap: 7, border: none, body: <Words><Name $size={16} $color={R}>易生支付</Name><EasyPay $size={7} $color={R}>EASY PAY</EasyPay></Words> },
  { mark: 'ray', pad: 9, gap: 5, border: none, name: '瑞通卡', size: 18, color: '#1d6fb8', sub: 'RayTong Card', subSize: 9, subColor: '#1d6fb8' },
  { mark: 'red', pad: 0, gap: 4, border: none, name: '瑞得卡', size: 19, color: R, sub: 'www.cnredcard.com', subSize: 7, subColor: '#e68080' },
  { pad: 12, border: none, body: marks.savi },
];
function EasyPay(props: { $size: number; $color: string; children: ReactNode }) {
  return <EasyLine {...props} />;
}
const EasyLine = styled(Sub)`align-self: center;`;

const BrandTiles = ({ list, gap, after }: { list: Brand[]; gap: number; after?: number }) => (
  <Tiles $gap={gap} $after={after}>
    {list.map((b, i) => b.empty ? <li key={i} /> : (
      <Tile key={i} $pad={b.pad} $gap={b.gap} $border={b.border} $bg={b.bg}>
        {b.mark && marks[b.mark]}
        {b.body || (
          <Words>
            <Name $size={b.size!} $color={b.color || K} $light={b.light} $slant={b.slant}>{b.name}</Name>
            {b.rule && <Rule $w={77} $color={b.rule} />}
            {b.sub && <Sub $size={b.subSize!} $color={b.subColor || b.color || K} $serif={b.serif}>{b.sub}</Sub>}
          </Words>
        )}
      </Tile>
    ))}
  </Tiles>
);

const helps: [string, string[]][] = [
  ['会员指南', ['会员注册', '购物和订单', '会员制度', '积分规则', '评论规则']],
  ['支付方式', ['货到付款', '网上支付', '邮局汇款', '发票制度', '礼品券使用']],
  ['配送方式', ['快递运送', '邮政普包', '特快专递']],
  ['售后服务', ['退换货政策', '退换货流程', '退款说明']],
  ['购物帮助', ['常见问题', '找回密码', '联系我们', '投诉建议']],
];
const contactFields: [string, string, number, string][] = [
  ['zip', '邮政编码：', 89, '有助于快速确定送货地址'],
  ['tel', '固定电话：', 139, '\u00a0如：010-12345678，固话与手机至少填写一项'],
  ['mobile', '手机号码：', 139, '填写手机号便于接收发货通知短信及送货前确认'],
  ['mail', '电子邮件：', 139, '用来接收订单提醒邮件，便于您及时了解订单状态'],
];
const aboutLinks = ['关于我们', '招商合作', '联系我们', '诚聘英才', '友情链接', '网站地图', '品牌大全'];

const Picker = ({ label, dots, w }: { label: string; dots: string; w: number }) => (
  <>
    <label htmlFor={label}>{label}</label>
    <SelectBox $w={w}><Select id={label}><option>{'请选择' + dots}</option></Select></SelectBox>
  </>
);

export default function App() {
  return (
    <>
      <GlobalStyle />
      <TopBar>
        <TopInner>
          <City>上海</City><a href="#city">[更换]</a>
          <Mobile href="#mobile">
            <Svg w={12} h={17}><rect x=".5" y=".5" width="11" height="16" rx="1.5" fill="#f9a868" stroke="#e8935a" /><rect x="2.5" y="2.5" width="7" height="9" fill="#fbe3d2" /><circle cx="6" cy="14" r="1" fill="#b5512a" /></Svg>
            手机版 <Caret $color="#ccc" />
          </Mobile>
          <Sep />你好, chenc 欢迎来为为网!
          <Logout href="#logout">退出</Logout>
          <TopRight><Dark href="#help">帮助中心</Dark><Dark href="#ask">购物咨询</Dark><Dark href="#service">在线客服</Dark></TopRight>
        </TopInner>
      </TopBar>
      <Header as="header">
        <Logo />
        <SearchCol>
          <SearchBox>
            <SearchKind><KindSelect aria-label="搜索类型"><option>商品</option></KindSelect><Caret $color="#444" /></SearchKind>
            <SearchInput aria-label="搜索" placeholder="请输入您要查询的商品关键字" />
            <SearchButton type="button">搜 索</SearchButton>
          </SearchBox>
          <HotList>
            <Hot href="#h" $on>活动报名</Hot><Hot href="#h">家具家纺</Hot><Hot href="#h">建材</Hot><Hot href="#h" $on>开关</Hot>
            <Hot href="#h">灯饰</Hot><Hot href="#h">五金</Hot><Hot href="#h" $on>英皇</Hot><Hot href="#h">方饰</Hot>
          </HotList>
        </SearchCol>
        <HeadButton href="#me" $w={106}>
          <Svg w={26} h={20}><circle cx="11" cy="6" r="4.5" fill="none" stroke="#ccc" strokeWidth="2" /><path d="M3 19q0-8 8-8t8 8" fill="none" stroke="#ccc" strokeWidth="2" /></Svg>
          我的为为<Arrow />
        </HeadButton>
        <HeadButton href="#cart" $w={126}>
          <Svg w={24} h={20}><path d="M1 4h5l1 10h12V6" fill="none" stroke="#ccc" strokeWidth="2" /><circle cx="8" cy="18" r="1.5" fill="#ccc" /><circle cx="18" cy="18" r="1.5" fill="#ccc" /></Svg>
          去购物车结算<Arrow /><Badge>0</Badge>
        </HeadButton>
      </Header>
      <NavBar>
        <NavInner>
          <NavLink href="#home" $on>首页</NavLink>
          {['建材', '家具', '云超市', '旅游', '为家宝'].map(t => <NavLink key={t} href="#nav">{t}</NavLink>)}
          <Points href="#points">
            <Svg w={20} h={20}><g fill="#fcc24e" stroke="#d9801e"><ellipse cx="8" cy="15" rx="6" ry="3" /><ellipse cx="7" cy="11" rx="6" ry="3" /><ellipse cx="8" cy="7" rx="6" ry="3" /><ellipse cx="7" cy="4" rx="6" ry="3" /><ellipse cx="15" cy="12" rx="3" ry="6" transform="rotate(-20 15 12)" /></g></Svg>
            签到送积分
          </Points>
        </NavInner>
      </NavBar>
      <Crumbs><Bullet />您的当前位置：<a href="#home">首页</a><Chevron /><a href="#order">填写核对订单信息</a></Crumbs>
      <Banner>
        <CartIcon />
        <BannerTitle>我的购物车<small>MY CART</small></BannerTitle>
        <div>
          <Steps><Step>我挑选的商品</Step><Step $on>填写核对订单信息</Step><Step $last>订单已成功</Step></Steps>
          <Track />
        </div>
      </Banner>
      <SubBar>填写核对订单信息</SubBar>
      <Main>
        <Block><TitleRow><Title>收货人信息</Title></TitleRow></Block>
        <Panel>
          <Field><FieldLabel htmlFor="name"><i>*</i>收货人姓名：</FieldLabel><Text id="name" $w={139} /></Field>
          <Field>
            <FieldLabel as="span"><i>*</i>地区：</FieldLabel>
            <Picker label="省份：" dots="..." w={110} />
            <Picker label="县/市：" dots=".............." w={147} />
            <Picker label="区:" dots="........." w={117} />
          </Field>
          <Field><FieldLabel htmlFor="addr"><i>*</i>收货人地址：</FieldLabel><Text id="addr" $w={339} /></Field>
          {contactFields.map(([id, label, w, note]) => (
            <Field key={id}>
              <FieldLabel htmlFor={id}>{label}</FieldLabel>
              <FieldControl><Text id={id} $w={w} /></FieldControl>
              <Note>{note}</Note>
            </Field>
          ))}
          <Field><FieldLabel as="span" /><Check type="checkbox" id="save" /><SaveLabel htmlFor="save">保存为我的收货人地址</SaveLabel></Field>
          <SaveButton type="button" $indent={62}>保存收货人信息</SaveButton>
        </Panel>

        <PayPanel>
          <Title>支付及配送方式</Title>
          <PayTable>
            <PayRow><PayHead>支付方式</PayHead><PayHeadNote>备注</PayHeadNote></PayRow>
            <PayRow><PayCell><Radio type="radio" name="pay" />货到付款</PayCell><PayNote>当面付款后验货，支持现金</PayNote></PayRow>
            <PayRow><PayCell><Radio type="radio" name="pay" defaultChecked />在线支付</PayCell><PayNote>即时到帐，支持绝大数银行借记卡及部分银行信用卡</PayNote></PayRow>
          </PayTable>
          <BankBox>
            <BankTitle>支持以下银行在线支付：</BankTitle>
            <Warning>
              <Svg w={16} h={15}><path d="M8 1 15 14H1Z" fill="#fbb040" stroke="#c87d1a" /><path d="M8 5v5M8 11v2" stroke="#222" strokeWidth="2" /></Svg>
              因为原深圳发展银行和原平安银行合并成“平安银行”，请选择“平安银行”付款，敬请谅解。
            </Warning>
            <BrandTiles list={banks} gap={17} after={13} />
            <BankTitle>支持以下支付平台：</BankTitle>
            <BrandTiles list={platforms} gap={4} />
            <BankTitle>支持以下预付卡：</BankTitle>
            <BrandTiles list={cards} gap={4} />
          </BankBox>
          <ShipTable>
            <ShipHead><ShipCell as="div" $bold>配送方式</ShipCell><span>运费</span></ShipHead>
            <ShipRow><ShipCell><Radio type="radio" name="ship" defaultChecked />普通快递</ShipCell><span>0.00 元</span></ShipRow>
            <ShipBox>
              <dt>商品重量:</dt><dd>0.2 kg</dd>
              <dt>运费说明:</dt><dd>运费详情请参考:<a href="#rule">运费规则说明</a></dd>
            </ShipBox>
          </ShipTable>
          <SaveButton type="button" $indent={52}>保存支付方式及配送方式</SaveButton>
        </PayPanel>

        <Block>
          <Title>发票信息<Edit href="#invoice" $gap>[选择/修改]</Edit></Title>
          <Lines><p>发票类型：纸质发票</p><p>发票抬头：</p><p>发票内容：</p></Lines>
        </Block>
        <Block>
          <Title>订单备注<Edit href="#note">[选择/修改]</Edit></Title>
          <Lines>暂无备注</Lines>
        </Block>
        <Block>
          <TitleRow><Title>商品清单</Title><GoBack href="#back">返回修改购物车</GoBack></TitleRow>
          <Goods>
            <colgroup>{[90, 0, 94, 69, 75, 69, 57].map((w, i) => <col key={i} width={w || undefined} />)}</colgroup>
            <thead><tr><th>商品编号</th><th>商品名称</th><th>单品重量</th><th>为为价</th><th>赠送积分</th><th>商品数量</th><th>库存状态</th></tr></thead>
            <tbody><tr>
              <td>12715335</td>
              <td><a href="#item">西门子远景系列信息电脑插座面板 雅白色 开关插座 西门子开关面板</a><em>[抢购]</em></td>
              <td>0.1kg</td><td><Price>¥28.40</Price></td><td>56</td><td>2</td><td>预订</td>
            </tr></tbody>
          </Goods>
        </Block>
        <SettleTitle><Title $bold>结算信息</Title></SettleTitle>
        <Settle>
          <Sum>
            商品金额： ￥56.80元 + 运费： ￥0.00元 - 积分抵销： ￥0.00元 - 优惠券： ￥0.00元 - 购开心点数抵销： ￥0.00元 - 活动立<br />
            减： ￥0.00元 -深聚券：￥0.00元 - 账户金额： ￥0.00元
          </Sum>
          <SettleRow>
            <Options><li>(+)使用积分抵消部分总额</li><li>(+)使用为为礼品券</li><li>(+)使用深聚优惠券</li><li>(+)使用购开心点数支付</li></Options>
            <Total>应付总额： <b>￥56.80</b> 元</Total>
          </SettleRow>
          <Confirm>
            <ConfirmRow $h={34}><Captcha>9 — 二   等于</Captcha><Change href="#change">看不清？换一张</Change></ConfirmRow>
            <ConfirmRow $h={20}><Ask htmlFor="answer">请用小写<b>数字</b>填写计算结果</Ask><Answer id="answer" /></ConfirmRow>
            <ConfirmRow $h={20}><Agree><Check type="checkbox" />同意为为网退换货政策</Agree></ConfirmRow>
            <Submit type="button">提交订单</Submit>
          </Confirm>
        </Settle>
      </Main>

      <Footer>
        <FootTop>
          <Service>
            <ServiceTitle>7x12H客服在线</ServiceTitle>
            <Contact>
              <Svg w={70} h={70}><circle cx="35" cy="35" r="33" fill="none" stroke="#fa3c30" strokeWidth="4" /><path d="M18 18l4-4 8 12-4 4q2 10 11 18l5-2 9 9-4 4q-5 2-10-2Q18 40 16 24q0-4 2-6Z" fill="#fa3c30" /><path d="M25 13l4-2 6 10-4 3ZM44 44l6-3 4 11-4 3Z" fill="#fa3c30" /></Svg>
              <div><Phone>4006-698-698</Phone><Hours>周一至周日 8:00-21:00</Hours><Mail>E-mail:kefu@homevv.cn</Mail></div>
            </Contact>
          </Service>
          <Help>
            {helps.map(([h, items]) => (
              <HelpCol key={h}><h3>{h}</h3><ul>{items.map(t => <li key={t}><a href="#help">{t}</a></li>)}</ul></HelpCol>
            ))}
          </Help>
        </FootTop>
        <Hatch />
        <Legal>
          <LinkRow>{aboutLinks.map(t => <React.Fragment key={t}><a href="#about">{t}</a><Bar /></React.Fragment>)}</LinkRow>
          <LinkPair><a href="#icp">沪ICP备08001311号</a><Bar /><a href="#license">营业执照</a></LinkPair>
          <Copy>Copyright © 2008-2015 homevv.com All Rights Reserved</Copy>
          <Certs>
            <Cert $ink="#1b4f9c" $size={10}><Svg w={30} h={34}><path d="M2 5q13-5 26 0v14q-2 9-13 14Q4 28 2 19Z" fill="#1a5a9e" /><circle cx="15" cy="15" r="7" fill="#48b4c8" /><path d="M4 8h22M15 4v26M5 20h20" stroke="#9fd4ea" /></Svg><b>{'网络社会\n征 信 网'}</b></Cert>
            <Cert><Svg w={36} h={24}><path d="M1 8h6q-1-7 4-6t3 6h5v14H1Z" fill="#f08a24" /><path d="M17 8h6q-1-6 4-6t3 6h5v6q-5 1 0 4v5H19v-5q-6 2-6-3t5-2Z" fill="#1d4fa0" /></Svg>{'支付宝\n特约商家'}</Cert>
            <Cert><Svg w={30} h={36}><path d="M15 1Q28 8 27 24q-2 10-12 11Q5 34 3 24 2 8 15 1Z" fill="#b9a052" /><path d="M15 4q10 6 9 14-2 6-9 7-7-1-9-7 0-9 9-14Z" fill="#c32026" /><circle cx="15" cy="14" r="5" fill="none" stroke="#f3c64b" /></Svg>上海工商</Cert>
            <Cert><Svg w={30} h={36}><circle cx="15" cy="19" r="12" fill="none" stroke="#e8101c" strokeWidth="5" /><path d="M5 35 9 27h12l4 8-6-3H11Z" fill="#e8101c" /><path d="M8 18h14q-1 6-7 7-6-1-7-7Z" fill="#f7941d" /><text x="6" y="6" fontSize="9" fontWeight="700" fill="#e8101c" fontFamily="Liberation Sans">315</text></Svg>{'中国诚信\n企业协会'}</Cert>
            <Cert><RedSign $edge="#f3c64b"><Svg w={30} h={28}><path d="M6 9q0-4 4-4h8v14q0 4-4 4H6ZM10 9h10q4 0 4 4v9q-2 3-5 3h-9Z" fill="none" stroke="#d8392b" strokeWidth="2.5" /></Svg>可信网站</RedSign></Cert>
            <Cert><RedSign $edge="#f08a24"><Svg w={30} h={28}><path d="M6 4q12-5 21 0 2 14-5 20-14 3-20-2Q1 12 6 4Z" fill="#d8202a" /><text x="6" y="21" fontSize="18" fontWeight="700" fill="#fff" fontFamily="Noto Sans CJK SC">信</text></Svg>诚信网站</RedSign></Cert>
            <Cert $ink="#1b2f7c" $size={14}><Svg w={28} h={30}><circle cx="14" cy="13" r="12" fill="#1d2f6e" /><circle cx="14" cy="13" r="8" fill="#e0202a" stroke="#f3c64b" strokeWidth="2" /><path d="M9 16h10M11 13h6M14 8v2" stroke="#f7d94c" strokeWidth="2" /><path d="M2 22q12 9 24 0l-4 7H6Z" fill="#e7a93a" /></Svg><b>沪公网备<small>3101130612</small></b></Cert>
          </Certs>
        </Legal>
      </Footer>

      <Side>
        <SideButton href="#survey">问卷<br />调查</SideButton>
        <SideButton href="#qr" aria-label="二维码">
          <Svg w={24} h={24}><rect width="24" height="24" fill="#fff" /><g fill="none" stroke="#f73320" strokeWidth="2"><path d="M3 3h6v6H3ZM15 3h6v6h-6ZM15 15h6v6h-6Z" /><path d="M12 1v5M12 9v4M1 12h4M7 12h3M3 15l5 5M8 15l-5 6M12 16v6M15 12h6" /></g></Svg>
        </SideButton>
      </Side>
      <Share href="#share" aria-label="分享">
        <Svg w={26} h={26}><rect width="26" height="26" fill="#f9b9a9" /><path d="M4 6l5 3q5-2 8 0l5-3 1 9q-2 5-9 4l2 7h-6l1-6q-8-1-9-6Z" fill="#fff" /><circle cx="9" cy="14" r="2.5" fill="none" stroke="#f2917e" strokeWidth="2" /><circle cx="17" cy="12" r="2.5" fill="none" stroke="#f2917e" strokeWidth="2" /></Svg>
        <Svg w={6} h={10}><path d="M0 0l5 5-5 5Z" fill="#ddd" /></Svg>
      </Share>
    </>
  );
}
